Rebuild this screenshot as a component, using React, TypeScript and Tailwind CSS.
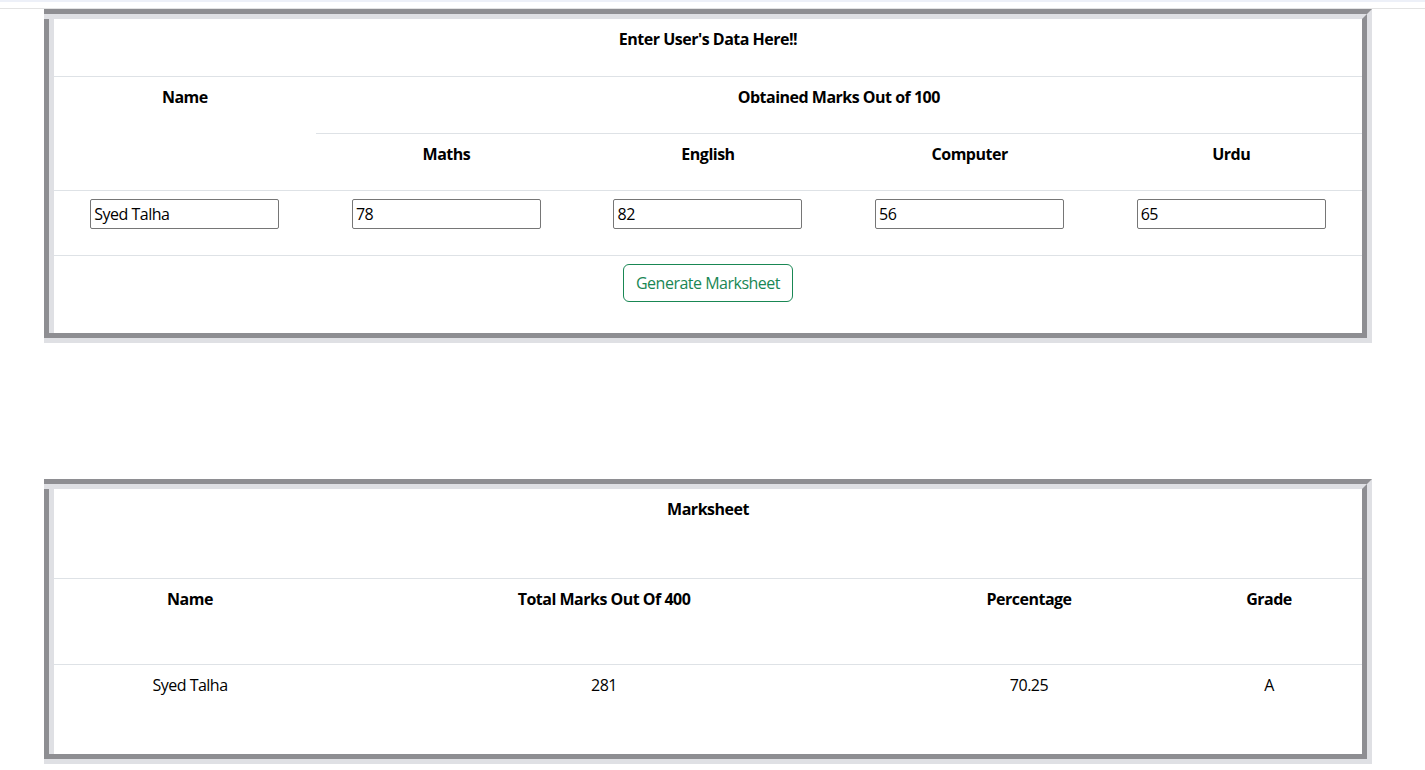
import React from "react";

function Frame({ children }: { children: React.ReactNode }) {
  return (
    <div className="ml-[44px] w-[1328px] border-t-[5px] border-r-[5px] border-b-[5px] border-t-[#8e8e92] border-r-[#dfe0e4] border-b-[#dfe0e4]">
      <div className="border-t-[5px] border-r-[5px] border-b-[5px] border-t-[#dfe0e4] border-r-[#8e8e92] border-b-[#8e8e92]">
        <div className="border-l-[5px] border-l-[#8e8e92]">
          <div className="border-l-[5px] border-l-[#dfe0e4] bg-white">{children}</div>
        </div>
      </div>
    </div>
  );
}

function Input({ value }: { value: string }) {
  return (
    <input
      defaultValue={value}
      className="w-[189px] h-[30px] border border-[#767676] rounded-[2px] px-[3px] text-[16px] tracking-[-0.5px] text-black outline-none"
    />
  );
}

export default function App() {
  const subjects = [
    ["Maths", "78"],
    ["English", "82"],
    ["Computer", "56"],
    ["Urdu", "65"],
  ];
  return (
    <div className="min-h-screen bg-white font-['Open_Sans',sans-serif] text-[16px] leading-[24px] tracking-[-0.5px] text-[#212529]">
      <div className="h-[2px] bg-[#edf0f8]" />
      <div className="h-[6px]" />
      <div className="h-px bg-[#e3e3e3]" />

      <Frame>
        <div className="grid grid-cols-5 w-[1308px]">
          <div className="col-span-5 h-[58px] border-b border-[#dee2e6] pt-2 text-center font-bold text-black">
            Enter User's Data Here!!
          </div>
          <div className="row-span-2 h-[114px] border-b border-[#dee2e6] pt-2 text-center font-bold text-black">
            Name
          </div>
          <div className="col-span-4 h-[57px] border-b border-[#dee2e6] pt-2 text-center font-bold text-black">
            Obtained Marks Out of 100
          </div>
          {subjects.map(([s]) => (
            <div key={s} className="h-[57px] border-b border-[#dee2e6] pt-2 text-center font-bold text-black">
              {s}
            </div>
          ))}
          <div className="h-[65px] border-b border-[#dee2e6] pt-2 flex justify-center">
            <Input value="Syed Talha" />
          </div>
          {subjects.map(([s, v]) => (
            <div key={s} className="h-[65px] border-b border-[#dee2e6] pt-2 flex justify-center">
              <Input value={v} />
            </div>
          ))}
          <div className="col-span-5 h-[77px] pt-2 flex justify-center items-start">
            <button className="h-[38px] px-3 border border-[#198754] rounded-[6px] text-[#198754] text-[16px] leading-[24px] tracking-[-0.5px] bg-white">
              Generate Marksheet
            </button>
          </div>
        </div>
      </Frame>

      <div className="h-[136px]" />

      <Frame>
        <div className="grid grid-cols-[272px_556px_294px_186px] w-[1308px]">
          <div className="col-span-4 h-[90px] border-b border-[#dee2e6] pt-2 text-center font-bold text-black">
            Marksheet
          </div>
          {["Name", "Total Marks Out Of 400", "Percentage", "Grade"].map((h) => (
            <div key={h} className="h-[86px] border-b border-[#dee2e6] pt-2 text-center font-bold text-black">
              {h}
            </div>
          ))}
          {["Syed Talha", "281", "70.25", "A"].map((v) => (
            <div key={v} className="h-[89px] pt-2 text-center text-black">
              {v}
            </div>
          ))}
        </div>
      </Frame>
    </div>
  );
}
